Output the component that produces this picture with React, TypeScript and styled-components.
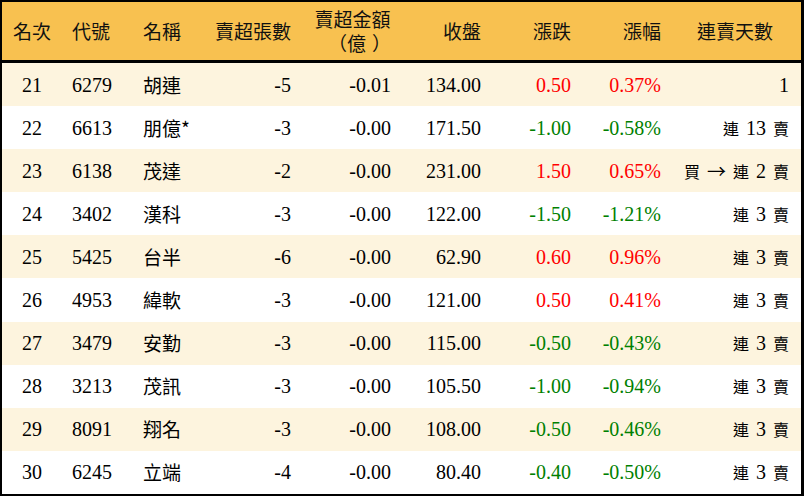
import styled, { createGlobalStyle } from "styled-components";

const GlobalStyle = createGlobalStyle`
  html, body {
    margin: 0;
    padding: 0;
    background: #fff;
  }
`;

type Align = "left" | "center" | "right";
type Tone = "up" | "down" | "flat";

interface Column {
  key: string;
  title: string;
  sub?: string;
  width: number;
  align: Align;
  headAlign?: Align;
  pad: number;
  colored?: boolean;
}

const columns: Column[] = [
  { key: "rank", title: "名次", width: 60, align: "center", pad: 0 },
  { key: "code", title: "代號", width: 71, align: "left", pad: 10 },
  { key: "name", title: "名稱", width: 67, align: "left", pad: 10 },
  { key: "lots", title: "賣超張數", width: 100, align: "right", pad: 9 },
  { key: "amount", title: "賣超金額", sub: "億", width: 100, align: "right", pad: 9 },
  { key: "close", title: "收盤", width: 90, align: "right", pad: 9 },
  { key: "change", title: "漲跌", width: 90, align: "right", pad: 9, colored: true },
  { key: "pct", title: "漲幅", width: 90, align: "right", pad: 9, colored: true },
  { key: "days", title: "連賣天數", width: 130, align: "right", headAlign: "center", pad: 11 },
];

const rows = [
  ["21", "6279", "胡連", "-5", "-0.01", "134.00", "0.50", "0.37%", "1"],
  ["22", "6613", "朋億*", "-3", "-0.00", "171.50", "-1.00", "-0.58%", "連 13 賣"],
  ["23", "6138", "茂達", "-2", "-0.00", "231.00", "1.50", "0.65%", "買 → 連 2 賣"],
  ["24", "3402", "漢科", "-3", "-0.00", "122.00", "-1.50", "-1.21%", "連 3 賣"],
  ["25", "5425", "台半", "-6", "-0.00", "62.90", "0.60", "0.96%", "連 3 賣"],
  ["26", "4953", "緯軟", "-3", "-0.00", "121.00", "0.50", "0.41%", "連 3 賣"],
  ["27", "3479", "安勤", "-3", "-0.00", "115.00", "-0.50", "-0.43%", "連 3 賣"],
  ["28", "3213", "茂訊", "-3", "-0.00", "105.50", "-1.00", "-0.94%", "連 3 賣"],
  ["29", "8091", "翔名", "-3", "-0.00", "108.00", "-0.50", "-0.46%", "連 3 賣"],
  ["30", "6245", "立端", "-4", "-0.00", "80.40", "-0.40", "-0.50%", "連 3 賣"],
];

const template = columns.map((c) => `${c.width}px`).join(" ");

const toneOf = (v: string): Tone =>
  v.startsWith("-") ? "down" : parseFloat(v) > 0 ? "up" : "flat";

const Table = styled.div`
  width: 804px;
  height: 496px;
  box-sizing: border-box;
  border: 2px solid #000;
  border-right-width: 3px;
  display: flex;
  flex-direction: column;
  font-family: "Liberation Serif", "Noto Sans CJK TC", serif;
  font-size: 20px;
  color: #000;
`;

const HeadRow = styled.div`
  display: grid;
  grid-template-columns: ${template};
  height: 58px;
  background: #f8c150;
  border-bottom: 3px solid #000;
`;

const BodyRow = styled.div<{ $striped: boolean }>`
  display: grid;
  grid-template-columns: ${template};
  flex: 1;
  background: ${(p) => (p.$striped ? "#fdf4de" : "#ffffff")};
`;

const Cell = styled.div<{ $align: Align; $pad: number }>`
  display: flex;
  flex-direction: column;
  justify-content: center;
  align-items: ${(p) =>
    p.$align === "left" ? "flex-start" : p.$align === "right" ? "flex-end" : "center"};
  padding: 0 ${(p) => (p.$align === "right" ? p.$pad : 0)}px 0
    ${(p) => (p.$align === "left" ? p.$pad : 0)}px;
  white-space: nowrap;
`;

const HeadText = styled.span`
  display: flex;
  flex-direction: column;
  font-family: "Noto Sans CJK TC", sans-serif;
  font-size: 19px;
  line-height: 24px;
  text-align: center;
  color: #111;
`;

const SubLine = styled.span`
  padding-left: 14px;
`;

const Paren = styled.span<{ $open?: boolean }>`
  display: inline-block;
  width: 19px;
  text-align: ${(p) => (p.$open ? "right" : "left")};
  margin-left: ${(p) => (p.$open ? 0 : 6)}px;
`;

const Value = styled.span<{ $tone: Tone }>`
  line-height: 22px;
  color: ${(p) => (p.$tone === "up" ? "#ff0000" : p.$tone === "down" ? "#008000" : "#000")};
`;

const NameText = styled.span`
  font-family: "Noto Sans CJK TC", sans-serif;
  font-size: 19px;
  line-height: 22px;
`;

const Streak = styled.span`
  display: inline-flex;
  align-items: center;
  gap: 7px;
  line-height: 22px;
`;

const StreakWord = styled.span<{ $arrow?: boolean }>`
  font-family: "Noto Sans CJK TC", sans-serif;
  font-size: ${(p) => (p.$arrow ? 19 : 16)}px;
`;

const renderStreak = (text: string) => (
  <Streak>
    {text.split(" ").map((t, i) =>
      /^\d+$/.test(t) ? (
        <span key={i}>{t}</span>
      ) : (
        <StreakWord key={i} $arrow={t === "→"}>
          {t}
        </StreakWord>
      )
    )}
  </Streak>
);

export default function App() {
  return (
    <>
      <GlobalStyle />
      <Table>
        <HeadRow>
          {columns.map((c) => (
            <Cell key={c.key} $align={c.headAlign ?? c.align} $pad={c.pad}>
              <HeadText>
                <span>{c.title}</span>
                {c.sub && (
                  <SubLine>
                    <Paren $open>（</Paren>
                    {c.sub}
                    <Paren>）</Paren>
                  </SubLine>
                )}
              </HeadText>
            </Cell>
          ))}
        </HeadRow>
        {rows.map((r, i) => (
          <BodyRow key={r[0]} $striped={i % 2 === 0}>
            {columns.map((c, j) => (
              <Cell key={c.key} $align={c.align} $pad={c.pad}>
                {c.key === "name" ? (
                  <NameText>{r[j]}</NameText>
                ) : c.key === "days" ? (
                  renderStreak(r[j])
                ) : (
                  <Value $tone={c.colored ? toneOf(r[j]) : "flat"}>{r[j]}</Value>
                )}
              </Cell>
            ))}
          </BodyRow>
        ))}
      </Table>
    </>
  );
}
